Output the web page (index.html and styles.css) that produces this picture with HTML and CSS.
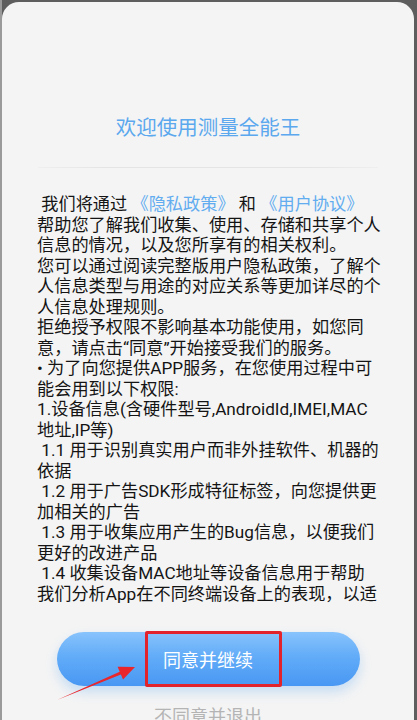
FILE: index.html
```html
<!DOCTYPE html>
<html lang="zh-CN">
<head>
<meta charset="utf-8">
<title>欢迎使用测量全能王</title>
<link rel="stylesheet" href="styles.css">
</head>
<body>
<div class="frame">
  <div class="card">
    <h1 class="title">欢迎使用测量全能王</h1>
    <div class="divider"></div>
    <div class="content">
      <p> 我们将通过 <a class="link">《隐私政策》</a> 和 <a class="link">《用户协议》</a></p>
      <p>帮助您了解我们收集、使用、存储和共享个人信息的情况，以及您所享有的相关权利。</p>
      <p>您可以通过阅读完整版用户隐私政策，了解个人信息类型与用途的对应关系等更加详尽的个人信息处理规则。</p>
      <p>拒绝授予权限不影响基本功能使用，如您同意，请点击“同意”开始接受我们的服务。</p>
      <p>• 为了向您提供APP服务，在您使用过程中可能会用到以下权限:</p>
      <p>1.设备信息(含硬件型号,AndroidId,IMEI,MAC地址,IP等)</p>
      <p> 1.1 用于识别真实用户而非外挂软件、机器的依据</p>
      <p> 1.2 用于广告SDK形成特征标签，向您提供更加相关的广告</p>
      <p> 1.3 用于收集应用产生的Bug信息，以便我们更好的改进产品</p>
      <p> 1.4 收集设备MAC地址等设备信息用于帮助我们分析App在不同终端设备上的表现，以适配不同的终端设备。</p>
    </div>
    <div class="actions">
      <div class="btn-wrap">
        <button class="agree">同意并继续</button>
        <span class="highlight"></span>
        <svg class="arrow" width="100" height="50" viewBox="0 0 100 50">
          <polygon points="2,44 65.9,18.6 68,23.6 80,11 62.6,10.8 64.7,15.8" fill="#e8262c"/>
        </svg>
      </div>
      <div class="decline">不同意并退出</div>
    </div>
  </div>
</div>
</body>
</html>
```

FILE: styles.css
```css
html, body {
  margin: 0;
  padding: 0;
}
body {
  background: #6e6e6e;
  width: 417px;
  height: 720px;
  overflow: hidden;
  font-family: Roboto, "Noto Sans CJK SC", sans-serif;
}
.frame {
  padding: 2px 3px 0 2px;
  background: linear-gradient(90deg, #9a9a9a 0, #9a9a9a 2px, transparent 2px), #5e5e5e;
}
.card {
  background: #f4f4f4;
  border-radius: 17px 17px 0 0;
  height: 718px;
  overflow: hidden;
  display: flex;
  flex-direction: column;
  align-items: center;
}
.card > * {
  flex-shrink: 0;
}
.title {
  margin: 114px 0 0;
  font-size: 20.5px;
  line-height: 24px;
  font-weight: 400;
  color: #5ba8ee;
  text-align: center;
}
.divider {
  margin-top: 27px;
  width: 340px;
  height: 1px;
  background: linear-gradient(90deg, rgba(226,226,226,0.3), #e4e4e4 20%, #e4e4e4 80%, rgba(226,226,226,0.3));
}
.content {
  margin-top: 26px;
  width: 344.2px;
  height: 410px;
  overflow: hidden;
  align-self: flex-start;
  margin-left: 35px;
  font-size: 17.2px;
  line-height: 20.5px;
  color: #141414;
}
.content p {
  margin: 0;
  white-space: pre-wrap;
}
.link {
  color: #62acf0;
}
.actions {
  margin-top: 28px;
  display: flex;
  flex-direction: column;
  align-items: center;
}
.btn-wrap {
  position: relative;
}
.agree {
  display: block;
  width: 303px;
  height: 54px;
  border: 0;
  border-radius: 27px;
  background: linear-gradient(180deg, #88c3fc 0%, #62acf8 45%, #4897f3 100%);
  box-shadow: 0 6px 12px rgba(80, 160, 245, 0.28);
  color: #ffffff;
  font-family: Roboto, "Noto Sans CJK SC", sans-serif;
  font-size: 18px;
  padding: 0;
}
.highlight {
  position: absolute;
  left: 88px;
  top: -1px;
  width: 131px;
  height: 50px;
  border: 3px solid #e3232b;
  border-radius: 2px;
}
.arrow {
  position: absolute;
  left: -2px;
  top: 24px;
  overflow: visible;
}
.decline {
  margin-top: 20px;
  font-size: 18px;
  line-height: 22px;
  color: #b4b4b4;
}
```
